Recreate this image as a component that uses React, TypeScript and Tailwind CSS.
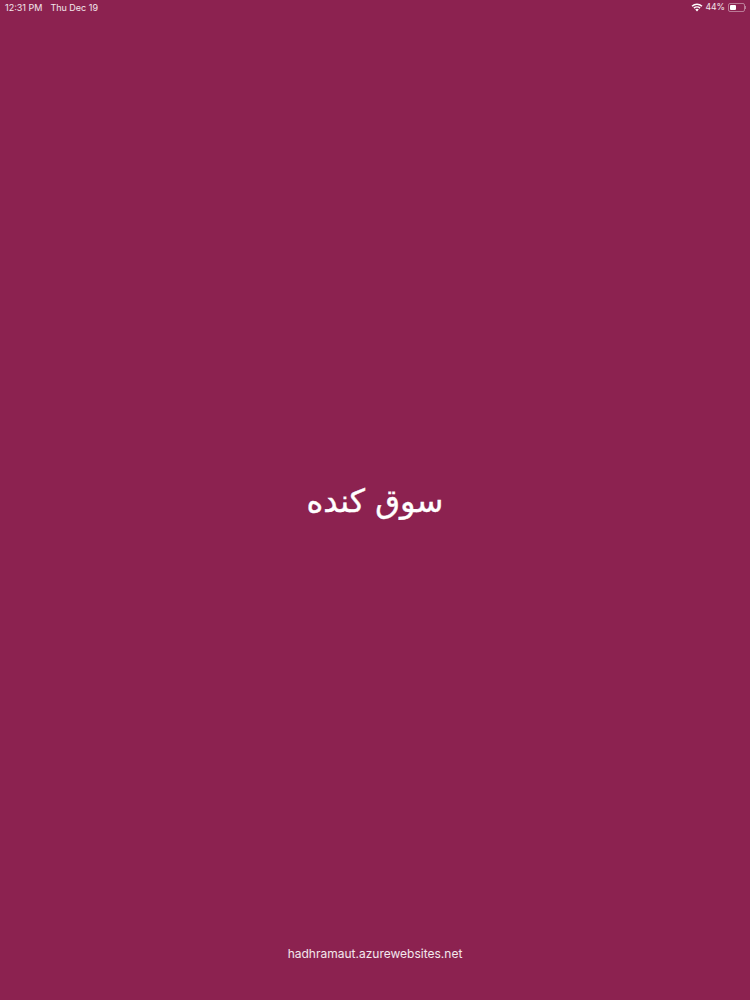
function StatusBar() {
  return (
    <div className="flex items-center justify-between h-[15px] pl-[5px] pr-[4px] text-[9px] leading-[15px] text-white/90 font-['Inter',sans-serif]">
      <div className="flex gap-[8px]">
        <span>12:31 PM</span>
        <span>Thu Dec 19</span>
      </div>
      <div className="flex items-center">
        <svg className="mr-[2px]" width="12" height="9" viewBox="0 0 12 9" fill="white">
          <path d="M6 8.6 4.2 6.6a2.6 2.6 0 0 1 3.6 0ZM3.4 5.7l-1-1.1a5.3 5.3 0 0 1 7.2 0l-1 1.1a3.8 3.8 0 0 0-5.2 0ZM1.6 3.8.5 2.7a8 8 0 0 1 11 0l-1.1 1.1a6.5 6.5 0 0 0-8.8 0Z" />
        </svg>
        <span className="text-[8.6px] mr-[3px]">44%</span>
        <div className="flex items-center">
          <div className="w-[17px] h-[9px] rounded-[2px] border border-white/40 p-[1px]">
            <div className="w-[6px] h-full bg-white rounded-[1px]" />
          </div>
          <div className="w-[1px] h-[3px] bg-white/40" />
        </div>
      </div>
    </div>
  );
}

export default function App() {
  return (
    <div className="h-[1000px] flex flex-col bg-[#8c2250] text-white font-['Inter',sans-serif]">
      <StatusBar />
      <div className="flex-1 flex items-center justify-center pt-[41px]">
        <h1 dir="rtl" className="text-[32px] leading-[40px] [-webkit-text-stroke:0.4px_white] font-['DejaVu_Sans','Noto_Sans',sans-serif]">
          سوق كنده
        </h1>
      </div>
      <p className="pb-[38px] text-center text-[12px] leading-[16px] text-white/90">hadhramaut.azurewebsites.net</p>
    </div>
  );
}
